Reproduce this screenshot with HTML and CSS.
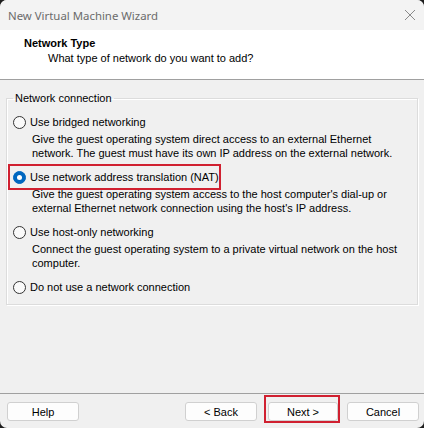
FILE: index.html
```html
<!DOCTYPE html>
<html lang="en">
<head>
    <meta charset="UTF-8" />
    <title>New Virtual Machine Wizard</title>
    <link rel="stylesheet" href="styles.css">
</head>
<body>
    <div class="dialog">
        <div class="titlebar">
            <span class="title">New Virtual Machine Wizard</span>
            <svg class="close" width="12" height="12" viewBox="0 0 12 12" aria-label="Close">
                <path d="M1 1 L11 11 M11 1 L1 11" stroke="#8a8a8a" stroke-width="1" fill="none" />
            </svg>
        </div>

        <div class="header">
            <div class="header-title">Network Type</div>
            <div class="header-sub">What type of network do you want to add?</div>
        </div>

        <div class="content">
            <fieldset class="group">
                <legend>Network connection</legend>

                <div class="option">
                    <div class="radio-row"><span class="radio"></span>Use bridged networking</div>
                    <div class="desc">Give the guest operating system direct access to an external Ethernet<br>network. The guest must have its own IP address on the external network.</div>
                </div>

                <div class="option">
                    <div class="radio-row marked"><span class="radio checked"></span>Use network address translation (NAT)</div>
                    <div class="desc">Give the guest operating system access to the host computer's dial-up or<br>external Ethernet network connection using the host's IP address.</div>
                </div>

                <div class="option">
                    <div class="radio-row"><span class="radio"></span>Use host-only networking</div>
                    <div class="desc">Connect the guest operating system to a private virtual network on the host<br>computer.</div>
                </div>

                <div class="option last">
                    <div class="radio-row"><span class="radio"></span>Do not use a network connection</div>
                </div>
            </fieldset>
        </div>

        <div class="footer">
            <button class="btn">Help</button>
            <span class="spacer"></span>
            <button class="btn">&lt; Back</button>
            <span class="mark-box"><button class="btn next">Next &gt;</button></span>
            <button class="btn">Cancel</button>
        </div>
    </div>
</body>
</html>
```

FILE: styles.css
```css
html, body {
    margin: 0;
    padding: 0;
    background-color: #1e1e1e;
}
.dialog {
    width: 424px;
    height: 428px;
    display: flex;
    flex-direction: column;
    background-color: #f0f0f0;
    border-radius: 7px;
    overflow: hidden;
    font-family: "Liberation Sans", Arial, sans-serif;
    font-size: 11px;
    color: #000;
}
.titlebar {
    height: 30px;
    flex: none;
    display: flex;
    align-items: center;
    justify-content: space-between;
    padding: 0 7px 0 8px;
    background-color: #f3f3f3;
}
.title {
    font-family: "Noto Sans", sans-serif;
    font-size: 11.4px;
    color: #6b6b6b;
}
.close {
    margin-right: 1px;
}
.header {
    height: 50px;
    flex: none;
    background-color: #fff;
    border-bottom: 1px solid #a0a0a0;
    box-sizing: border-box;
    padding: 6px 0 0 24px;
}
.header-title {
    font-weight: 700;
    line-height: 14px;
}
.header-sub {
    padding-left: 24px;
    margin-top: 1px;
    line-height: 14px;
}
.content {
    flex: 1;
    padding: 12px 6px 0 6px;
}
.group {
    margin: 0;
    padding: 10px 8px 9px 6px;
    border: 1px solid #dcdcdc;
    box-shadow: inset 1px 1px 0 #fff, 1px 1px 0 #fff;
}
.group legend {
    padding: 0 2px;
    line-height: 12px;
}
.option {
    margin-bottom: 9px;
}
.option.last {
    margin-bottom: 0;
}
.radio-row {
    display: flex;
    align-items: center;
    height: 16px;
    white-space: nowrap;
}
.radio-row.marked {
    width: 203px;
    outline: 2px solid #d02030;
    outline-offset: 3px;
}
.radio {
    width: 11px;
    height: 11px;
    border: 1px solid #333;
    border-radius: 50%;
    background-color: #fafafa;
    margin-right: 4px;
    flex: none;
}
.radio.checked {
    background-color: #0067c0;
    border-color: #0067c0;
    display: flex;
    align-items: center;
    justify-content: center;
}
.radio.checked::after {
    content: "";
    width: 5px;
    height: 5px;
    border-radius: 50%;
    background-color: #fff;
}
.desc {
    padding: 2px 0 0 19px;
    line-height: 14px;
}
.footer {
    height: 35px;
    flex: none;
    box-sizing: border-box;
    border-top: 1px solid #a0a0a0;
    display: flex;
    align-items: flex-start;
    padding: 8px 5px 0 7px;
}
.spacer {
    flex: 1;
}
.btn {
    width: 72px;
    height: 19px;
    margin: 0;
    padding: 0;
    background-color: #fdfdfd;
    border: 1px solid #d0d0d0;
    border-radius: 3px;
    font-family: "Liberation Sans", Arial, sans-serif;
    font-size: 11px;
    color: #000;
}
.mark-box {
    display: inline-flex;
    margin: -7px 7px 0 7px;
    padding: 5px 0 0 2px;
    border: 2px solid #d02030;
}
.btn.next {
    width: 70px;
}
```
